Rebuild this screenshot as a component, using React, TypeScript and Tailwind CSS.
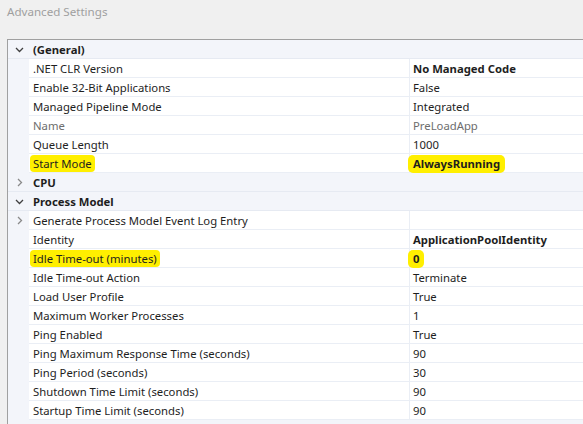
import React from "react";

type Row =
  | { kind: "cat"; label: string; open: boolean }
  | {
      kind: "prop";
      label: string;
      value: string;
      bold?: boolean;
      dim?: boolean;
      expander?: boolean;
      markName?: boolean;
      markValue?: boolean;
    };

const rows: Row[] = [
  { kind: "cat", label: "(General)", open: true },
  { kind: "prop", label: ".NET CLR Version", value: "No Managed Code", bold: true },
  { kind: "prop", label: "Enable 32-Bit Applications", value: "False" },
  { kind: "prop", label: "Managed Pipeline Mode", value: "Integrated" },
  { kind: "prop", label: "Name", value: "PreLoadApp", dim: true },
  { kind: "prop", label: "Queue Length", value: "1000" },
  { kind: "prop", label: "Start Mode", value: "AlwaysRunning", bold: true, markName: true, markValue: true },
  { kind: "cat", label: "CPU", open: false },
  { kind: "cat", label: "Process Model", open: true },
  { kind: "prop", label: "Generate Process Model Event Log Entry", value: "", expander: true },
  { kind: "prop", label: "Identity", value: "ApplicationPoolIdentity", bold: true },
  { kind: "prop", label: "Idle Time-out (minutes)", value: "0", bold: true, markName: true, markValue: true },
  { kind: "prop", label: "Idle Time-out Action", value: "Terminate" },
  { kind: "prop", label: "Load User Profile", value: "True" },
  { kind: "prop", label: "Maximum Worker Processes", value: "1" },
  { kind: "prop", label: "Ping Enabled", value: "True" },
  { kind: "prop", label: "Ping Maximum Response Time (seconds)", value: "90" },
  { kind: "prop", label: "Ping Period (seconds)", value: "30" },
  { kind: "prop", label: "Shutdown Time Limit (seconds)", value: "90" },
  { kind: "prop", label: "Startup Time Limit (seconds)", value: "90" },
];

function Chevron({ open, light }: { open: boolean; light?: boolean }) {
  return (
    <svg width="9" height="9" viewBox="0 0 9 9" className="block">
      <polyline
        points={open ? "1,3 4.5,6.5 8,3" : "3,1 6.5,4.5 3,8"}
        fill="none"
        stroke={light ? "#8a8a8a" : "#404040"}
        strokeWidth="1.3"
      />
    </svg>
  );
}

export default function App() {
  return (
    <div
      className="h-[424px] w-[583px] overflow-hidden bg-[#f0f0f0] text-[11.3px] text-[#1e1e1e]"
      style={{ fontFamily: '"Noto Sans", "Open Sans", sans-serif' }}
    >
      <div className="flex h-[39px] items-start pl-[7px] pt-[3px] text-[11.6px] text-[#9f9f9f]">
        Advanced Settings
      </div>
      <div className="ml-[7px] h-[385px] border-l border-t border-[#a0a0a0] bg-[#f3f5fa]">
        {rows.map((row, i) =>
          row.kind === "cat" ? (
            <div key={i} className="flex h-[19px] items-center border-b border-[#e6eaf2]">
              <div className="flex w-[21px] justify-center pl-[2px]">
                <Chevron open={row.open} light={!row.open} />
              </div>
              <div className="pl-[4px] pt-px font-bold leading-none">{row.label}</div>
            </div>
          ) : (
            <div key={i} className="flex h-[19px]">
              <div className="flex w-[21px] items-center justify-center pl-[2px]">
                {row.expander && <Chevron open={false} light />}
              </div>
              <div className="flex flex-1 border-b border-[#eaeef5] bg-white">
                <div className="flex w-[381px] items-center border-r border-[#eaeef5] pl-[4px] pt-px">
                  <span
                    className={
                      (row.dim ? "text-[#6d6d6d] " : "") +
                      (row.markName ? "-ml-[3px] rounded-[4px] bg-[#ffef00] px-[3px] " : "") +
                      "leading-[17px]"
                    }
                  >
                    {row.label}
                  </span>
                </div>
                <div className="flex flex-1 items-center pl-[3px] pt-px">
                  <span
                    className={
                      (row.bold ? "font-bold " : "") +
                      (row.dim ? "text-[#6d6d6d] " : "") +
                      (row.markValue ? "-ml-[5px] rounded-[5px] bg-[#ffef00] px-[5px] " : "") +
                      "leading-[18px]"
                    }
                  >
                    {row.value}
                  </span>
                </div>
              </div>
            </div>
          )
        )}
      </div>
    </div>
  );
}
